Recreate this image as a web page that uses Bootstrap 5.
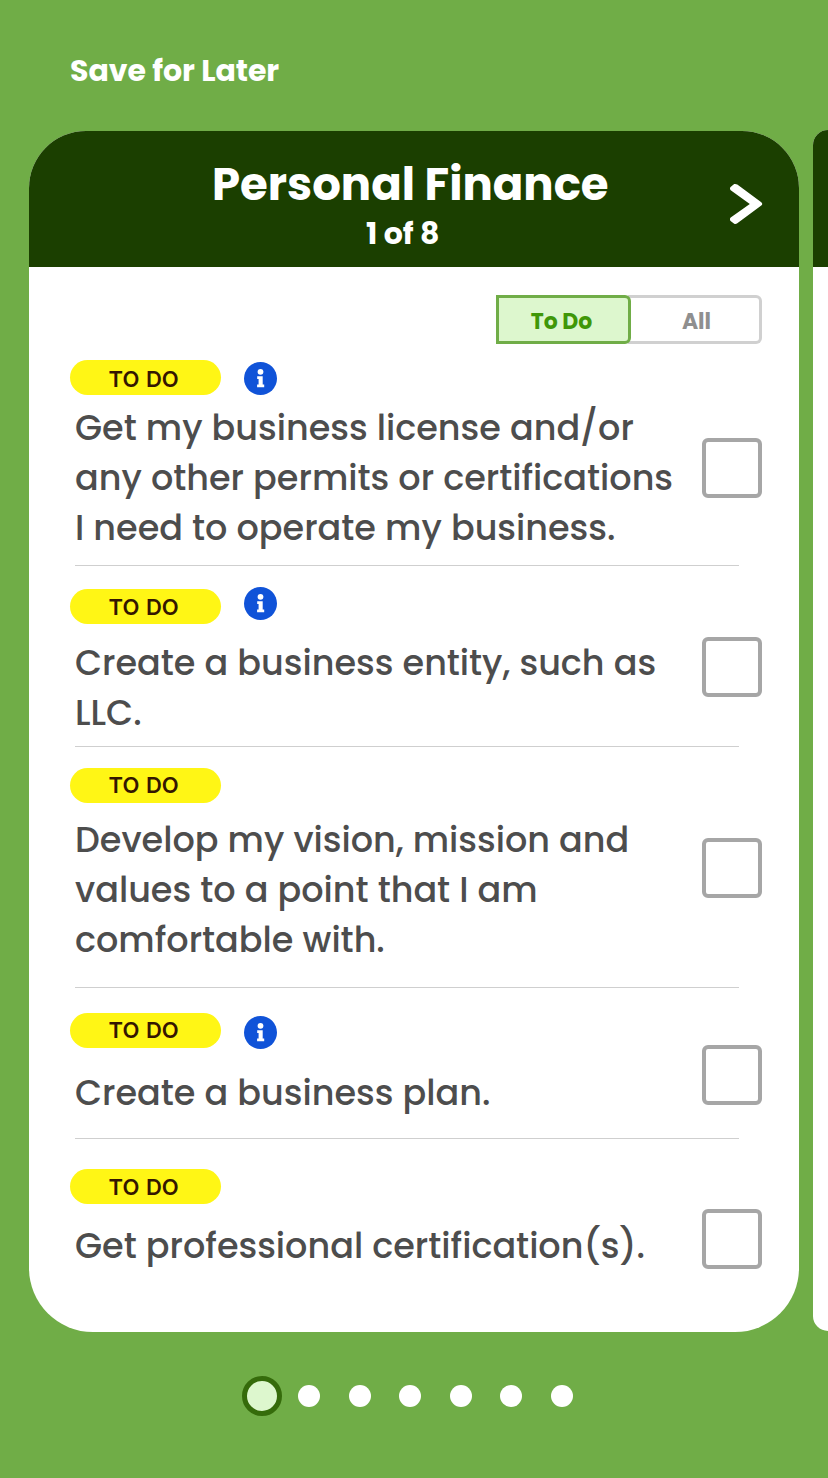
<!DOCTYPE html>
<html lang="en">
<head>
<meta charset="utf-8">
<meta name="viewport" content="width=device-width, initial-scale=1">
<title>Personal Finance</title>
<link href="https://cdn.jsdelivr.net/npm/bootstrap@5.3.0/dist/css/bootstrap.min.css" rel="stylesheet">
<style>
body{background:#70ad47;font-family:Poppins,Inter,"Open Sans",sans-serif;width:828px;height:1478px;overflow:hidden}
.topbar{height:130px;padding:46px 0 0 70px}
.save-link{font-size:30px;line-height:50px;font-weight:700;color:#fff;text-decoration:none;letter-spacing:-.04px}
.deck{padding:1px 0 0 29px;gap:14px;height:1202px;overflow:hidden}
.sheet{width:770px;height:1201px;border:0;border-radius:57px 57px 64px 64px;overflow:hidden;background:#fff}
.sheet-head{height:136px;background:#1b3f00;color:#fff;padding:0 36px 0 183px}
.sheet-title{font-size:45px;line-height:56px;font-weight:700;margin:26px 0 0}
.sheet-count{font-size:30px;line-height:36px;font-weight:700;padding-left:154px;margin-top:3px}
.sheet-next{margin-top:52px;width:34px;height:42px}
.peek{width:15px;height:1201px;margin-top:-1px;border-radius:16px 0 0 16px;overflow:hidden;background:#fff}
.peek-head{height:137px;background:#1b3f00}
.filters{padding:28px 37px 0 0;height:77px}
.filter{height:49px;padding:3px 0 0;font-size:22px;line-height:42px;font-weight:700;border-radius:0 6px 6px 0;border:3px solid #d0d0d0;background:#fff;color:#8f8f8f}
.filter-all{width:134px;margin-left:-3px;border-left:0;padding-left:6px}
.filter-on{width:135px;background:#ddf7ce;border-color:#70ad47;color:#3f9708;z-index:1;padding-right:4px}
.task{padding-left:46px;height:var(--h)}
.task-main{width:627px;padding-top:var(--top)}
.task-head{height:35px;margin-left:-5px;gap:23px}
.pill{width:151px;height:35px;border-radius:18px;background:#fff615;color:#341600;font:600 22px/var(--lh) Inter,sans-serif;letter-spacing:.1px;word-spacing:.8px;padding-left:38.5px}
.info{width:33px;height:33px;margin-top:var(--info)}
.task-text{margin:var(--gap) 0 0;font-size:35px;line-height:50px;font-weight:500;color:#4d4d4d;white-space:nowrap}
.check{width:60px;height:60px;margin:var(--box) 0 0;border:4px solid #a6a6a6;border-radius:6px;background:#fff;appearance:none}
.rule{height:1px;width:664px;margin:-1px 0 0 46px;background:#cfcfcf}
.t1{--h:222px;--top:16px;--gap:8px;--box:94px;--info:2px;--lh:38px}
.t2{--h:181px;--top:23px;--gap:14px;--box:71px;--info:-2px;--lh:36px}
.t3{--h:241px;--top:21px;--gap:12px;--box:91px;--lh:34px}
.t4{--h:151px;--top:25px;--gap:20px;--box:57px;--info:3px;--lh:34px}
.t5{--h:193px;--top:30px;--gap:17px;--box:70px;--lh:36px}
.dots{padding:44px 0 0 242px;gap:28.5px}
.dot{width:22px;height:22px;border-radius:50%;background:#fff}
.dot-on{width:40px;height:40px;border:5px solid #356b0b;background:#ddf7ce;margin-right:-12.5px}
</style>
</head>
<body>
<svg class="d-none"><symbol id="info" viewBox="0 0 33 33"><circle cx="16.5" cy="16.5" r="16.5" fill="#1053d8"/><circle cx="16.5" cy="9.8" r="2.9" fill="#fff"/><path d="M13.2 14.3h5.5v8.2h1.5v2.7h-7.1v-2.7h1.5V17h-1.4z" fill="#fff"/></symbol></svg>
<header class="topbar"><a class="save-link d-block" href="#">Save for Later</a></header>
<main class="deck d-flex">
  <section class="sheet card flex-shrink-0">
    <header class="sheet-head d-flex justify-content-between">
      <div>
        <h1 class="sheet-title">Personal Finance</h1>
        <div class="sheet-count">1 of 8</div>
      </div>
      <svg class="sheet-next" viewBox="0 0 34 42"><path d="M5.2 1Q6.8.6 8.3 1.6L32.3 19.2Q34.2 21 32.3 22.6L8.3 40.3Q6.8 41.3 5.2 40.7L1.6 38Q.2 36 1.7 34.5L20.8 21 1.7 7.3Q.2 5.7 1.6 3.9Z" fill="#fff"/></svg>
    </header>
    <div class="filters d-flex justify-content-end">
      <button class="filter filter-on position-relative">To Do</button>
      <button class="filter filter-all">All</button>
    </div>
    <div class="task t1 d-flex">
      <div class="task-main">
        <div class="task-head d-flex"><span class="pill">TO DO</span><svg class="info"><use href="#info"/></svg></div>
        <p class="task-text">Get my business license and/or<br>any other permits or certifications<br>I need to operate my business.</p>
      </div>
      <input class="check" type="checkbox">
    </div>
    <div class="rule"></div>
    <div class="task t2 d-flex">
      <div class="task-main">
        <div class="task-head d-flex"><span class="pill">TO DO</span><svg class="info"><use href="#info"/></svg></div>
        <p class="task-text">Create a business entity, such as<br>LLC.</p>
      </div>
      <input class="check" type="checkbox">
    </div>
    <div class="rule"></div>
    <div class="task t3 d-flex">
      <div class="task-main">
        <div class="task-head d-flex"><span class="pill">TO DO</span></div>
        <p class="task-text">Develop my vision, mission and<br>values to a point that I am<br>comfortable with.</p>
      </div>
      <input class="check" type="checkbox">
    </div>
    <div class="rule"></div>
    <div class="task t4 d-flex">
      <div class="task-main">
        <div class="task-head d-flex"><span class="pill">TO DO</span><svg class="info"><use href="#info"/></svg></div>
        <p class="task-text">Create a business plan.</p>
      </div>
      <input class="check" type="checkbox">
    </div>
    <div class="rule"></div>
    <div class="task t5 d-flex">
      <div class="task-main">
        <div class="task-head d-flex"><span class="pill">TO DO</span></div>
        <p class="task-text">Get professional certification(s).</p>
      </div>
      <input class="check" type="checkbox">
    </div>
  </section>
  <section class="peek flex-shrink-0"><div class="peek-head"></div></section>
</main>
<nav class="dots d-flex align-items-center">
  <span class="dot dot-on"></span><span class="dot"></span><span class="dot"></span><span class="dot"></span><span class="dot"></span><span class="dot"></span><span class="dot"></span>
</nav>
<script src="https://cdn.jsdelivr.net/npm/bootstrap@5.3.0/dist/js/bootstrap.bundle.min.js"></script>
</body>
</html>
